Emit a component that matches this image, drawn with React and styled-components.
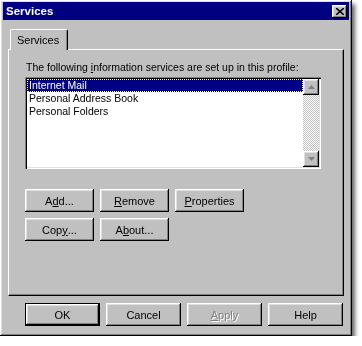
import React from 'react';
import styled, { createGlobalStyle } from 'styled-components';

const GlobalStyle = createGlobalStyle`
  html, body {
    margin: 0;
    padding: 0;
    background: #ffffff;
  }
  body {
    font-family: "Liberation Sans", Arial, sans-serif;
    font-size: 10.5px;
    color: #000;
  }
`;

const raised = `
  box-shadow: inset -1px -1px #000, inset 1px 1px #fff,
    inset -2px -2px #808080, inset 2px 2px #dfdfdf;
`;

const Window = styled.div`
  width: 352px;
  height: 336px;
  box-sizing: border-box;
  padding: 2px 3px 3px 3px;
  background: #c0c0c0;
  display: flex;
  flex-direction: column;
  ${raised}
  filter: drop-shadow(3px 4px 2px rgba(0, 0, 0, 0.6));
`;

const TitleBar = styled.div`
  height: 18px;
  background: #000080;
  display: flex;
  align-items: center;
  justify-content: space-between;
  padding: 0 2px 0 3px;
`;

const Title = styled.span`
  color: #fff;
  font-weight: bold;
  font-size: 11.5px;
`;

const CloseButton = styled.div`
  width: 15px;
  height: 13px;
  background: #c0c0c0;
  display: flex;
  align-items: center;
  justify-content: center;
  ${raised}
`;

const Body = styled.div`
  padding: 9px 5px 0 5px;
  display: flex;
  flex-direction: column;
`;

const TabRow = styled.div`
  display: flex;
  padding-left: 2px;
  position: relative;
  z-index: 1;
`;

const Tab = styled.div`
  height: 20px;
  padding: 0 8px 0 6px;
  display: flex;
  align-items: center;
  background: #c0c0c0;
  border-left: 1px solid #fff;
  border-top: 1px solid #fff;
  border-right: 1px solid #000;
  box-shadow: inset -1px 0 #808080;
  border-radius: 2px 2px 0 0;
  margin-bottom: -1px;
  font-size: 11px;
`;

const Panel = styled.div`
  width: 336px;
  height: 247px;
  box-sizing: border-box;
  padding: 11px 16px 0 16px;
  display: flex;
  flex-direction: column;
  border-left: 1px solid #fff;
  border-top: 1px solid #fff;
  border-right: 1px solid #000;
  border-bottom: 1px solid #000;
  box-shadow: inset -1px -1px #808080;
`;

const Label = styled.div`
  line-height: 13px;
  margin-bottom: 3px;
  padding-left: 1px;
`;

const Key = styled.span`
  text-decoration: underline;
  text-underline-offset: 1px;
`;

const ListBox = styled.div`
  width: 296px;
  height: 92px;
  box-sizing: border-box;
  background: #fff;
  padding: 2px;
  display: flex;
  box-shadow: inset 1px 1px #808080, inset 2px 2px #000,
    inset -1px -1px #fff, inset -2px -2px #dfdfdf;
`;

const Items = styled.div`
  flex: 1;
  display: flex;
  flex-direction: column;
`;

const Item = styled.div`
  height: 13px;
  line-height: 12px;
  padding-left: 2px;
  box-sizing: border-box;
  background: ${p => (p.$selected ? '#000080' : 'transparent')};
  color: ${p => (p.$selected ? '#fff' : '#000')};
  outline: ${p => (p.$selected ? '1px dotted #ffff80' : 'none')};
  outline-offset: -1px;
`;

const ScrollBar = styled.div`
  width: 16px;
  display: flex;
  flex-direction: column;
  justify-content: space-between;
  background-color: #c0c0c0;
  background-image: repeating-conic-gradient(#fff 0 25%, #c0c0c0 0 50%);
  background-size: 2px 2px;
`;

const ScrollButton = styled.div`
  width: 16px;
  height: 16px;
  background: #c0c0c0;
  display: flex;
  align-items: center;
  justify-content: center;
  ${raised}
`;

const ButtonGrid = styled.div`
  margin-top: 20px;
  display: flex;
  flex-direction: column;
  gap: 6px;
`;

const ButtonRow = styled.div`
  display: flex;
  gap: 6px;
`;

const Button = styled.div`
  width: ${p => p.$w || 69}px;
  height: 23px;
  box-sizing: border-box;
  display: flex;
  align-items: center;
  justify-content: center;
  background: #c0c0c0;
  color: ${p => (p.$disabled ? '#808080' : '#000')};
  text-shadow: ${p => (p.$disabled ? '1px 1px #fff' : 'none')};
  border: ${p => (p.$default ? '1px solid #000' : 'none')};
  ${raised}
  font-size: 11px;
`;

const Footer = styled.div`
  margin-top: 7px;
  padding-left: 17px;
`;

function Arrow({ up }) {
  return (
    <svg width="7" height="4" viewBox="0 0 7 4">
      <path d={up ? 'M3.5 0 L7 4 L0 4 Z' : 'M0 0 L7 0 L3.5 4 Z'} fill="#808080" />
    </svg>
  );
}

export default function App() {
  return (
    <>
      <GlobalStyle />
      <Window>
        <TitleBar>
          <Title>Services</Title>
          <CloseButton>
            <svg width="8" height="7" viewBox="0 0 8 7">
              <path d="M0 0 L8 7 M8 0 L0 7" stroke="#000" strokeWidth="1.6" />
            </svg>
          </CloseButton>
        </TitleBar>
        <Body>
          <TabRow>
            <Tab>Services</Tab>
          </TabRow>
          <Panel>
            <Label>
              The following <Key>i</Key>nformation services are set up in this profile:
            </Label>
            <ListBox>
              <Items>
                <Item $selected>Internet Mail</Item>
                <Item>Personal Address Book</Item>
                <Item>Personal Folders</Item>
              </Items>
              <ScrollBar>
                <ScrollButton><Arrow up /></ScrollButton>
                <ScrollButton><Arrow /></ScrollButton>
              </ScrollBar>
            </ListBox>
            <ButtonGrid>
              <ButtonRow>
                <Button>A<Key>d</Key>d...</Button>
                <Button><Key>R</Key>emove</Button>
                <Button><Key>P</Key>roperties</Button>
              </ButtonRow>
              <ButtonRow>
                <Button>Cop<Key>y</Key>...</Button>
                <Button>A<Key>b</Key>out...</Button>
              </ButtonRow>
            </ButtonGrid>
          </Panel>
          <Footer>
            <ButtonRow>
              <Button $w={75} $default>OK</Button>
              <Button $w={75}>Cancel</Button>
              <Button $w={75} $disabled><Key>A</Key>pply</Button>
              <Button $w={75}>Help</Button>
            </ButtonRow>
          </Footer>
        </Body>
      </Window>
    </>
  );
}
